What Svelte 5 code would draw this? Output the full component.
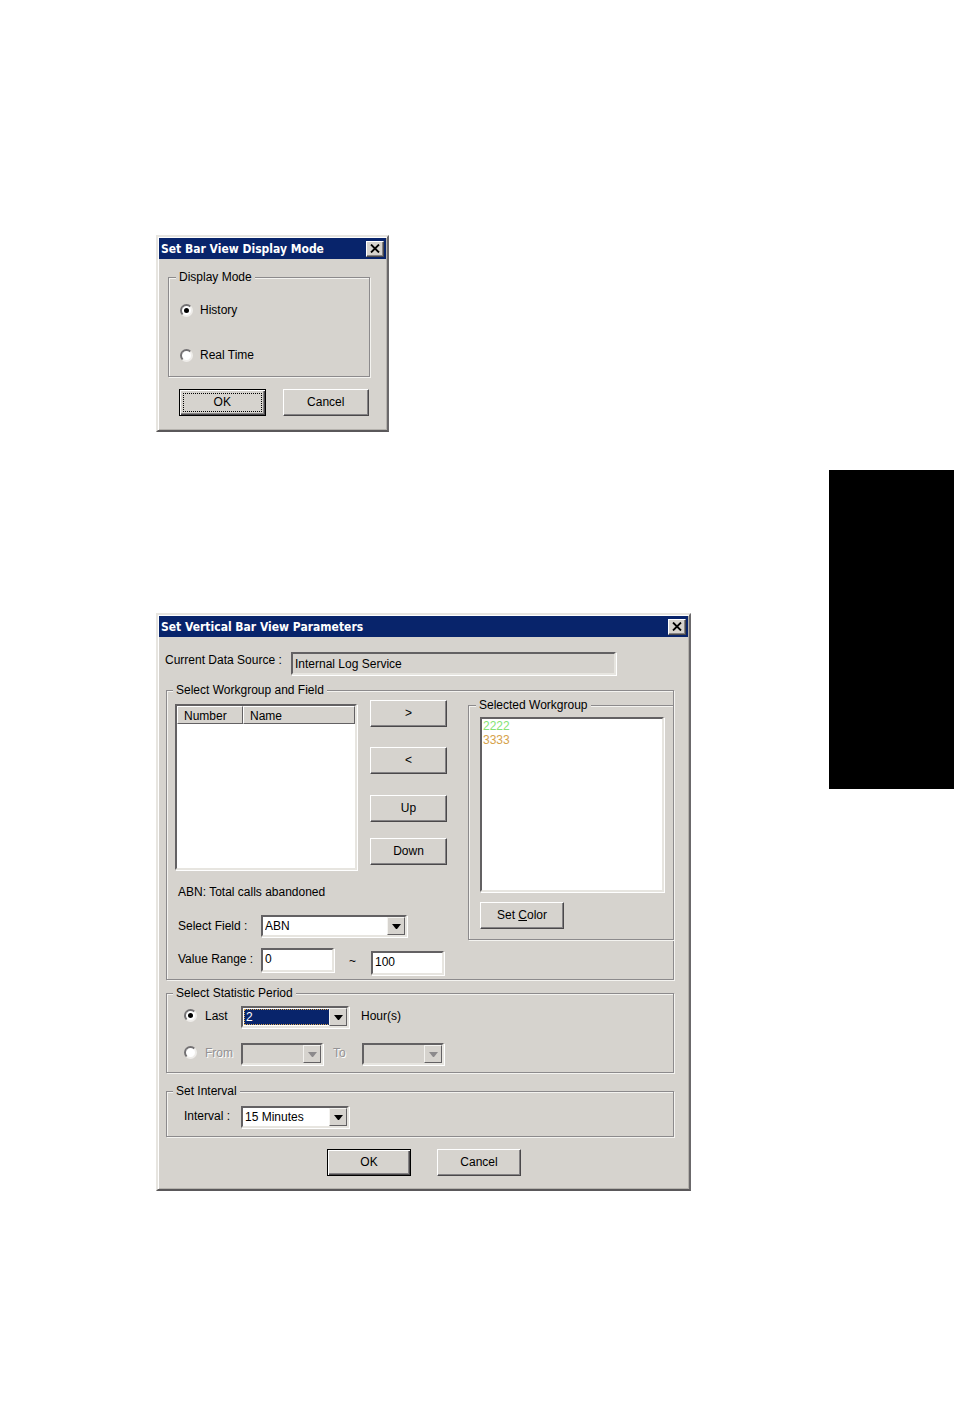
<script>
    let displayMode = "history";
    let period = "last";
    let dataSource = "Internal Log Service";
    let field = "ABN";
    let minValue = "0";
    let maxValue = "100";
    let hours = "2";
    let interval = "15 Minutes";
    let selected = [];

    const workgroups = [
        { number: "2222", tone: "green" },
        { number: "3333", tone: "orange" }
    ];
</script>

{#snippet closeButton()}
    <button class="close" type="button" aria-label="Close">
        <svg width="10" height="9" viewBox="0 0 10 9">
            <path d="M1 0.5 L9 8.5 M9 0.5 L1 8.5" stroke="#000" stroke-width="1.8" fill="none" />
        </svg>
    </button>
{/snippet}

{#snippet arrow()}
    <span class="arrow">
        <svg width="9" height="5" viewBox="0 0 9 5"><path d="M0 0 H9 L5 5 H4 Z" fill="currentColor" /></svg>
    </span>
{/snippet}

<div class="page">
    <main>
        <form class="dialog small" on:submit|preventDefault>
            <header>
                <h2>Set Bar View Display Mode</h2>
                {@render closeButton()}
            </header>
            <div class="body">
                <fieldset class="modes">
                    <legend>Display Mode</legend>
                    <label><input type="radio" name="mode" value="history" bind:group={displayMode}> History</label>
                    <label><input type="radio" name="mode" value="realtime" bind:group={displayMode}> Real Time</label>
                </fieldset>
                <div class="actions">
                    <button class="default focused" type="submit"><span>OK</span></button>
                    <button type="button">Cancel</button>
                </div>
            </div>
        </form>

        <form class="dialog large" on:submit|preventDefault>
            <header>
                <h2>Set Vertical Bar View Parameters</h2>
                {@render closeButton()}
            </header>
            <div class="body">
                <div class="source">
                    <label for="source">Current Data Source :</label>
                    <input id="source" class="text" type="text" readonly value={dataSource}>
                </div>

                <fieldset class="workgroup">
                    <legend>Select Workgroup and Field</legend>
                    <div class="left">
                        <div class="picker">
                            <div class="list">
                                <table>
                                    <thead>
                                        <tr><th class="number">Number</th><th>Name</th></tr>
                                    </thead>
                                </table>
                            </div>
                            <div class="move">
                                <button type="button">&gt;</button>
                                <button type="button">&lt;</button>
                                <button type="button">Up</button>
                                <button type="button">Down</button>
                            </div>
                        </div>
                        <p>ABN: Total calls abandoned</p>
                        <div class="row field">
                            <label for="field">Select Field :</label>
                            <span class="combo">
                                <select id="field" bind:value={field}><option>ABN</option></select>
                                {@render arrow()}
                            </span>
                        </div>
                        <div class="row range">
                            <label for="min">Value Range :</label>
                            <input id="min" class="text" type="text" bind:value={minValue}>
                            <span class="tilde">~</span>
                            <input class="text max" type="text" aria-label="Maximum value" bind:value={maxValue}>
                        </div>
                    </div>

                    <fieldset class="chosen">
                        <legend>Selected Workgroup</legend>
                        <select class="listbox" multiple size="12" aria-label="Selected Workgroup" bind:value={selected}>
                            {#each workgroups as group}
                                <option class={group.tone} value={group.number}>{group.number}</option>
                            {/each}
                        </select>
                        <button type="button">Set <u>C</u>olor</button>
                    </fieldset>
                </fieldset>

                <fieldset class="period">
                    <legend>Select Statistic Period</legend>
                    <div class="row">
                        <label><input type="radio" name="period" value="last" bind:group={period}> Last</label>
                        <span class="combo active">
                            <select id="hours" aria-label="Hours" bind:value={hours}><option>2</option></select>
                            {@render arrow()}
                        </span>
                        <label class="unit" for="hours">Hour(s)</label>
                    </div>
                    <div class="row">
                        <label class="off"><input type="radio" name="period" value="from" bind:group={period}> From</label>
                        <span class="combo disabled">
                            <select aria-label="From" disabled></select>
                            {@render arrow()}
                        </span>
                        <label class="to off" for="to">To</label>
                        <span class="combo disabled">
                            <select id="to" disabled></select>
                            {@render arrow()}
                        </span>
                    </div>
                </fieldset>

                <fieldset class="interval">
                    <legend>Set Interval</legend>
                    <div class="row">
                        <label for="interval">Interval :</label>
                        <span class="combo">
                            <select id="interval" bind:value={interval}><option>15 Minutes</option></select>
                            {@render arrow()}
                        </span>
                    </div>
                </fieldset>

                <div class="actions">
                    <button class="default" type="submit"><span>OK</span></button>
                    <button type="button">Cancel</button>
                </div>
            </div>
        </form>
    </main>
    <aside></aside>
</div>

<style>
    :global(body) {
        margin: 0;
        background: #fff;
    }

    .page {
        display: grid;
        grid-template-columns: minmax(0, 1fr) 125px;
        font: 12px/14px "Liberation Sans", Arial, sans-serif;
        color: #000;
    }

    .page *, .page *::before {
        box-sizing: border-box;
    }

    main {
        padding: 235px 0 220px 156px;
    }

    aside {
        height: 319px;
        margin-top: 470px;
        background: #000;
    }

    .dialog {
        padding: 1px;
        background: #d6d3ce;
        border: 2px solid;
        border-color: #e7e5e0 #6b696b #5a585a #e7e5e0;
        box-shadow: inset 1px 1px 0 #fff, inset -1px -1px 0 #b5b2ad;
    }

    .small {
        max-width: 233px;
        margin-bottom: 181px;
    }

    .large {
        max-width: 535px;
    }

    header {
        display: flex;
        align-items: center;
        justify-content: space-between;
        height: 21px;
        padding: 0 2px;
        background: #08246b;
    }

    h2 {
        margin: 0;
        font: bold 12px/20px "DejaVu Sans Condensed", "DejaVu Sans", sans-serif;
        font-stretch: condensed;
        color: #fff;
        white-space: nowrap;
    }

    button, input, select {
        margin: 0;
        font: inherit;
        color: inherit;
    }

    button {
        height: 27px;
        padding: 0 0 2px;
        background: #d6d3ce;
        border: 1px solid;
        border-color: #fff #4a484a #4a484a #fff;
        border-radius: 0;
        box-shadow: inset -1px -1px 0 #848284;
    }

    .close {
        display: flex;
        align-items: center;
        justify-content: center;
        width: 18px;
        height: 16px;
        padding: 0;
    }

    .default {
        border-color: #000;
        box-shadow: inset 1px 1px 0 #fff, inset -1px -1px 0 #4a484a, inset -2px -2px 0 #848284;
    }

    .focused {
        padding: 3px;
    }

    .focused span {
        display: block;
        height: 19px;
        line-height: 16px;
        border: 1px dotted #000;
    }

    .actions {
        display: flex;
    }

    fieldset {
        min-width: 0;
        margin: 0;
        padding: 0 8px;
        border: 1px solid #8c8a8c;
        box-shadow: 1px 1px 0 #f4f3f0, inset 1px 1px 0 #f4f3f0;
    }

    legend {
        margin-left: -2px;
        padding: 0 3px;
        background: #d6d3ce;
    }

    p {
        margin: 0;
    }

    input[type="radio"] {
        display: grid;
        place-items: center;
        flex: none;
        appearance: none;
        width: 13px;
        height: 13px;
        background: #fff;
        border: 2px solid;
        border-color: #737173 #efedea #efedea #737173;
        border-radius: 50%;
    }

    input[type="radio"]:checked::before {
        content: "";
        width: 5px;
        height: 5px;
        border-radius: 50%;
        background: #000;
    }

    .modes label, .period label {
        display: flex;
        align-items: center;
    }

    .small .body {
        padding: 11px 16px 13px 9px;
    }

    .modes {
        padding: 19px 8px 14px 9px;
    }

    .modes label {
        gap: 7px;
        padding-left: 2px;
    }

    .modes label + label {
        margin-top: 31px;
    }

    .small .actions {
        display: grid;
        grid-template-columns: 1fr 1fr;
        gap: 17px;
        margin: 12px 1px 0 11px;
    }

    .large .body {
        padding: 15px 14px 12px 7px;
    }

    .text, .combo, .list, .listbox {
        background: #fff;
        border: 2px solid;
        border-color: #636163 #e7e5e0 #e7e5e0 #636163;
        border-radius: 0;
        box-shadow: 1px 1px 0 #fff;
    }

    .text {
        min-width: 0;
        height: 24px;
        padding: 0 2px 2px;
    }

    .source {
        display: grid;
        grid-template-columns: 126px minmax(0, 325px);
        margin-left: -1px;
    }

    .source .text {
        height: 23px;
        padding: 0 2px;
        background: #d6d3ce;
    }

    .source label {
        padding-top: 1px;
    }

    .workgroup {
        display: grid;
        grid-template-columns: 272px minmax(0, 1fr);
        align-items: start;
        column-gap: 21px;
        margin-top: 8px;
        padding: 1px 0 4px 8px;
    }

    .picker {
        display: flex;
        justify-content: space-between;
    }

    .list {
        width: 182px;
        height: 166px;
        margin-top: 6px;
    }

    table {
        width: 100%;
        border-collapse: separate;
        border-spacing: 0;
        table-layout: fixed;
    }

    th {
        height: 18px;
        padding: 2px 6px 0;
        font-weight: normal;
        text-align: left;
        background: #d6d3ce;
        border: 1px solid;
        border-color: #fff #636163 #636163 #fff;
    }

    .number {
        width: 66px;
    }

    .move {
        display: grid;
        grid-template-rows: 47px 48px 43px 27px;
        width: 77px;
        margin-top: 2px;
    }

    .left p {
        margin: 15px 0 16px 3px;
    }

    .row {
        display: flex;
        align-items: center;
    }

    .combo {
        display: grid;
        grid-template-columns: minmax(0, 1fr) 18px;
        flex: none;
        width: 108px;
        height: 22px;
    }

    .combo select {
        grid-area: 1 / 1 / 2 / 3;
        appearance: none;
        padding: 0 20px 0 2px;
        background: transparent;
        border: none;
        border-radius: 0;
    }

    .arrow {
        grid-area: 1 / 2;
        display: flex;
        align-items: center;
        justify-content: center;
        background: #d6d3ce;
        border: 1px solid;
        border-color: #f4f3f0 #636163 #636163 #f4f3f0;
        pointer-events: none;
    }

    .active select {
        margin: 1px;
        color: #fff;
        background: #08246b;
        outline: 1px dotted #d6a552;
        outline-offset: -1px;
    }

    .disabled {
        width: 82px;
        color: #8c8a8c;
        background: #d6d3ce;
    }

    .off {
        color: #949294;
        text-shadow: 1px 1px 0 #fff;
    }

    .left .row label {
        width: 86px;
        padding-left: 3px;
    }

    .field .combo {
        width: 146px;
    }

    .range {
        align-items: flex-start;
        margin-top: 11px;
    }

    .range label {
        padding-top: 4px;
    }

    .left .range .text {
        width: 73px;
    }

    .range .max {
        margin-top: 3px;
    }

    .tilde {
        width: 37px;
        padding-top: 6px;
        text-align: center;
    }

    .chosen {
        margin-right: -1px;
        padding: 5px 9px 10px 9px;
    }

    .listbox {
        display: block;
        width: calc(100% - 2px);
        height: 175px;
        margin: 0 0 10px 2px;
        padding: 0;
        overflow: hidden;
        appearance: none;
    }

    option {
        min-height: 14px;
        padding: 0 1px;
    }

    .green {
        color: #84e373;
    }

    .orange {
        color: #d6a24a;
    }

    .chosen button {
        width: 84px;
        margin-left: 2px;
    }

    .period {
        margin-top: 6px;
        padding: 6px 8px 7px;
    }

    .period .row, .interval .row {
        padding-left: 9px;
    }

    .period .row + .row {
        margin-top: 15px;
    }

    .period label, .interval label {
        padding-bottom: 3px;
    }

    .period label:first-child {
        gap: 8px;
        width: 57px;
    }

    .period .unit {
        margin-left: 12px;
    }

    .period .to {
        width: 39px;
        padding-left: 10px;
    }

    .interval {
        margin-top: 11px;
        padding: 8px;
    }

    .interval label {
        width: 57px;
    }

    .large .actions {
        gap: 26px;
        margin: 12px 0 0 161px;
    }

    .large .actions button {
        width: 84px;
    }
</style>
